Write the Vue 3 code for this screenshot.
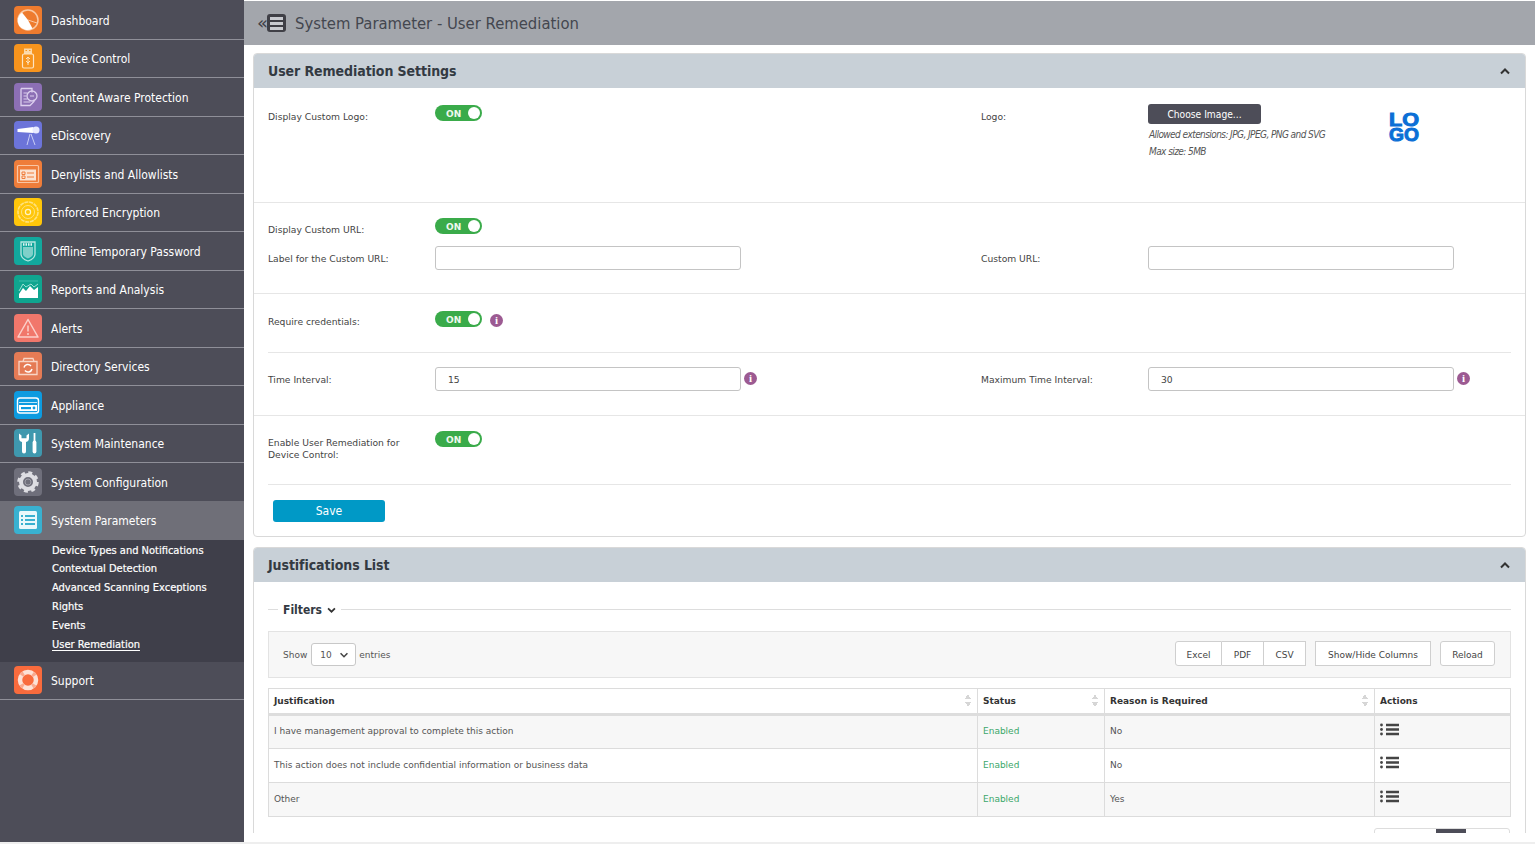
<script setup>
const menu = [
  { name: 'Dashboard', bg: '#ee7b2e', icon: '<circle cx="14" cy="14" r="10" fill="none" stroke="#f9c9a4" stroke-width="1.5"/><path d="M14 14 L8 6.5 A9.5 9.5 0 0 0 18.5 22.5Z" fill="#fff"/><path d="M14 14l9 3" stroke="#f9c9a4" fill="none"/>' },
  { name: 'Device Control', bg: '#f7941d', icon: '<rect x="10" y="4.5" width="8" height="5.5" fill="#fbd8a8"/><path d="M11.500 6.500h1.500M15 6.500h1.500" stroke="#f7941d"/><rect x="8.5" y="10" width="11" height="14" rx="1.5" fill="none" stroke="#fde3c2" stroke-width="1.2"/><path d="M14 13v8M12 15l2-2 2 2M12 17l2 2 2-2" fill="none" stroke="#fde3c2"/>' },
  { name: 'Content Aware Protection', bg: '#8c6fb5', icon: '<path d="M7 5.5h11v4M7 5.5v17h9l4-4v-2" fill="none" stroke="#dccfee" stroke-width="1.3"/><circle cx="18" cy="13" r="5" fill="none" stroke="#dccfee" stroke-width="1.3"/><path d="M9.5 10h4M9.5 13h3M9.5 16h4M9.5 19h7M16 13h4" stroke="#dccfee"/>' },
  { name: 'eDiscovery', bg: '#6c74d9', icon: '<path d="M3.5 8l16-2v6l-16-1z" fill="#fff"/><circle cx="22" cy="9" r="3.5" fill="#e8eaff"/><path d="M16 13l-3 11M17 13l4 11" stroke="#c9cdf6" fill="none"/>' },
  { name: 'Denylists and Allowlists', bg: '#ef7d3a', icon: '<rect x="3.5" y="5.5" width="21" height="17" rx="1" fill="none" stroke="#f9c6a4" stroke-width="1.2"/><rect x="6" y="9.5" width="16" height="11" fill="#fbe3d2"/><path d="M8 12h3v2.5H8zM8 16h3v2.5H8zM13 13h7M13 17h7" stroke="#ef7d3a" fill="none"/>' },
  { name: 'Enforced Encryption', bg: '#ffc60a', icon: '<circle cx="14" cy="14" r="10" fill="none" stroke="#ffe27f" stroke-width="1.6" stroke-dasharray="4 .8"/><circle cx="14" cy="14" r="6.5" fill="none" stroke="#ffe27f"/><circle cx="14" cy="14" r="2.6" fill="none" stroke="#fff3c4" stroke-width="1.2"/>' },
  { name: 'Offline Temporary Password', bg: '#12a89d', icon: '<path d="M7 5h14v12c0 4-4 6-7 7-3-1-7-3-7-7z" fill="none" stroke="#b6e6e1" stroke-width="1.3"/><path d="M9 10h10v7c0 2-3 3.500-5 4.500-2-1-5-2.500-5-4.500z" fill="#7fd0c9"/><path d="M9 7.500h10" stroke="#e2f6f4" stroke-width="2.500" stroke-dasharray="1.500 1"/>' },
  { name: 'Reports and Analysis', bg: '#0fa58f', icon: '<path d="M5 6h19" stroke="#3dbcaa"/><path d="M5 23V19l4-6 3 3 4-5 4 4 4-3v11z" fill="#fff"/><path d="M5 16l4-7 3 3 5-3 3 3 4-3" fill="none" stroke="#9fe0d5"/>' },
  { name: 'Alerts', bg: '#f1776b', icon: '<path d="M14 5.500L24 23H4z" fill="none" stroke="#fbd0ca" stroke-width="1.500" stroke-linejoin="round"/><path d="M14 11.500v6" stroke="#fbd0ca" stroke-width="1.500"/><circle cx="14" cy="20" r="1" fill="#fbd0ca"/>' },
  { name: 'Directory Services', bg: '#e57b55', icon: '<path d="M5 9.500h18v13H5zM9 9.500l1-3h9l1 3" fill="none" stroke="#f8d5c6" stroke-width="1.300"/><path d="M10 15.500a4 4 0 0 1 7-1.500M18 17a4 4 0 0 1-7 1.500" fill="none" stroke="#fff" stroke-width="1.500"/>' },
  { name: 'Appliance', bg: '#0d9be0', icon: '<rect x="3.500" y="7" width="21" height="15" rx="2.500" fill="none" stroke="#fff" stroke-width="1.400"/><rect x="5" y="14" width="18" height="6" fill="#fff"/><path d="M5 11.500h18" stroke="#bfe5f8" stroke-width="1"/><rect x="7" y="16" width="10" height="2.200" fill="#0d9be0"/><circle cx="20" cy="17" r="1.400" fill="#0d9be0"/>' },
  { name: 'System Maintenance', bg: '#3f98ae', icon: '<path d="M5 4.500v4.500c0 2.200 1 3.500 3 4v9.500a2 2 0 0 0 4 0V13c2-.5 3-1.800 3-4V4.500l-2.500 2v2.700h-5V6.500z" fill="#fff"/><path d="M20.500 4v8" stroke="#fff" stroke-width="1.800"/><path d="M20.500 13.500v9" stroke="#fff" stroke-width="3.800" stroke-linecap="round"/>' },
  { name: 'System Configuration', bg: '#6f6f7b', icon: '<circle cx="14" cy="14" r="7" fill="none" stroke="#dedee3" stroke-width="4"/><circle cx="14" cy="14" r="9.500" fill="none" stroke="#dedee3" stroke-width="2.500" stroke-dasharray="4 3.460"/><circle cx="14" cy="14" r="3" fill="none" stroke="#a9a9b3" stroke-width=".8"/>' },
  { name: 'System Parameters', bg: '#39b1d0', active: true, icon: '<rect x="5" y="5" width="18" height="18" rx="1.500" fill="#e9f8fb"/><path d="M7 10h2M7 14h2M7 18h2M11 10h10M11 14h10M11 18h10" stroke="#39b1d0" stroke-width="2"/>' },
];

const subMenu = ['Device Types and Notifications', 'Contextual Detection', 'Advanced Scanning Exceptions', 'Rights', 'Events', 'User Remediation'];

const support = { name: 'Support', bg: '#f96b3d', icon: '<circle cx="14" cy="14" r="8" fill="none" stroke="#fde1d6" stroke-width="4.500"/><circle cx="14" cy="14" r="8" fill="none" stroke="#f9a98e" stroke-width="4.500" stroke-dasharray="3 9.570" stroke-dashoffset="7.800"/>' };

const rows = [
  { text: 'I have management approval to complete this action', reason: 'No' },
  { text: 'This action does not include confidential information or business data', reason: 'No' },
  { text: 'Other', reason: 'Yes' },
];
</script>

<template>
  <div class="page">
    <aside class="sidebar">
      <template v-for="item in menu" :key="item.name">
        <div class="menuItem" :class="{ active: item.active }">
          <span class="menuIcon" :style="{ backgroundColor: item.bg }">
            <svg viewBox="0 0 28 28" width="28" height="28" v-html="item.icon"></svg>
          </span>
          <span class="menuText">{{ item.name }}</span>
        </div>
      </template>
      <ul class="subMenu">
        <li v-for="sub in subMenu" :key="sub">
          <span :class="{ current: sub === 'User Remediation' }">{{ sub }}</span>
        </li>
      </ul>
      <div class="menuItem">
        <span class="menuIcon" :style="{ backgroundColor: support.bg }">
          <svg viewBox="0 0 28 28" width="28" height="28" v-html="support.icon"></svg>
        </span>
        <span class="menuText">{{ support.name }}</span>
      </div>
    </aside>

    <main class="main">
      <header class="topBar">
        <span class="collapse">«</span>
        <span class="burger"><i></i><i></i><i></i></span>
        <h1>System Parameter - User Remediation</h1>
      </header>

      <div class="content">
        <section class="panel">
          <div class="panelHead">
            <h2>User Remediation Settings</h2>
            <svg class="chevron" viewBox="0 0 10 7" width="10" height="7"><path d="M1 5.500l4-4 4 4" fill="none" stroke="#333" stroke-width="2" /></svg>
          </div>

          <div class="row rowLogo">
            <label>Display Custom Logo:</label>
            <div><span class="toggle">ON<b></b></span></div>
            <label>Logo:</label>
            <div class="logoCell">
              <div>
                <button class="chooseBtn">Choose Image...</button>
                <p class="hint">Allowed extensions: JPG, JPEG, PNG and SVG</p>
                <p class="hint">Max size: 5MB</p>
              </div>
              <svg class="logoMark" viewBox="0 0 31 30" width="31" height="30">
                <text x="0" y="14" textLength="30" lengthAdjust="spacingAndGlyphs">LO</text>
                <text x="0" y="29" textLength="30" lengthAdjust="spacingAndGlyphs">GO</text>
              </svg>
            </div>
          </div>

          <div class="row rowUrl">
            <label>Display Custom URL:</label>
            <div class="urlToggle"><span class="toggle">ON<b></b></span></div>
            <label class="lineTwo">Label for the Custom URL:</label>
            <div class="lineTwo"><input class="field" /></div>
            <label class="lineTwo">Custom URL:</label>
            <div class="lineTwo"><input class="field" /></div>
          </div>

          <div class="row rowCreds inset">
            <label>Require credentials:</label>
            <div class="inline">
              <span class="toggle">ON<b></b></span>
              <span class="info low">i</span>
            </div>
          </div>

          <div class="row rowTime">
            <label>Time Interval:</label>
            <div class="inline"><input class="field" value="15" /><span class="info high">i</span></div>
            <label>Maximum Time Interval:</label>
            <div class="inline"><input class="field" value="30" /><span class="info high">i</span></div>
          </div>

          <div class="row rowEnable inset">
            <label>Enable User Remediation for<br />Device Control:</label>
            <div><span class="toggle">ON<b></b></span></div>
          </div>

          <div class="saveRow"><button class="saveBtn">Save</button></div>
        </section>

        <section class="panel listPanel">
          <div class="panelHead">
            <h2>Justifications List</h2>
            <svg class="chevron" viewBox="0 0 10 7" width="10" height="7"><path d="M1 5.500l4-4 4 4" fill="none" stroke="#333" stroke-width="2" /></svg>
          </div>

          <div class="listBody">
            <div class="filters">
              <span class="rule short"></span>
              <strong>Filters</strong>
              <svg viewBox="0 0 10 7" width="9" height="6"><path d="M1 1.500l4 4 4-4" fill="none" stroke="#333" stroke-width="2" /></svg>
              <span class="rule"></span>
            </div>

            <div class="toolbar">
              <span>Show</span>
              <span class="select">10
                <svg viewBox="0 0 10 7" width="10" height="6"><path d="M1 1.500l4 4 4-4" fill="none" stroke="#444" stroke-width="1.800" /></svg>
              </span>
              <span>entries</span>
              <div class="actions">
                <div class="btnGroup">
                  <button>Excel</button><button>PDF</button><button>CSV</button>
                </div>
                <button class="toolBtn">Show/Hide Columns</button>
                <button class="toolBtn reload">Reload</button>
              </div>
            </div>

            <table>
              <colgroup>
                <col style="width: 709px" />
                <col style="width: 127px" />
                <col style="width: 270px" />
                <col />
              </colgroup>
              <thead>
                <tr>
                  <th class="sortable">Justification</th>
                  <th class="sortable">Status</th>
                  <th class="sortable">Reason is Required</th>
                  <th>Actions</th>
                </tr>
              </thead>
              <tbody>
                <tr v-for="row in rows" :key="row.text">
                  <td>{{ row.text }}</td>
                  <td class="enabled">Enabled</td>
                  <td>{{ row.reason }}</td>
                  <td class="actionCell">
                    <svg viewBox="0 0 19 13" width="19" height="13">
                      <path d="M6 2h13M6 6.500h13M6 11h13" stroke="#444" stroke-width="2.400" />
                      <circle cx="1.500" cy="2" r="1.400" fill="#444" />
                      <circle cx="1.500" cy="6.500" r="1.400" fill="#444" />
                      <circle cx="1.500" cy="11" r="1.400" fill="#444" />
                    </svg>
                  </td>
                </tr>
              </tbody>
            </table>

            <div class="pager"><span></span><span class="currentPage"></span><span></span></div>
          </div>
        </section>
      </div>
      <div class="gap"></div>
    </main>
  </div>
</template>

<style>
html, body { margin: 0; background: #fff; overflow: hidden; }
</style>

<style scoped>
.page {
  display: flex;
  height: 844px;
  font-family: "DejaVu Sans", Verdana, sans-serif;
  color: #444;
  overflow: hidden;
  border-bottom: 2px solid #eee;
  box-sizing: border-box;
}
.sidebar {
  width: 244px;
  flex-shrink: 0;
  padding-top: 1px;
  background: #4d4d58;
  color: #fff;
  font-size: 12px;
  font-stretch: condensed;
}
.menuItem {
  display: flex;
  align-items: center;
  gap: 9px;
  height: 38.5px;
  box-sizing: border-box;
  padding-left: 14px;
  border-bottom: 1px solid #8f8f98;
}
.menuItem.active {
  background: #6f6f78;
  border-bottom-color: #6f6f78;
  margin-top: -0.5px;
}
.menuText { margin-top: 2px; }
.menuIcon {
  width: 28px;
  height: 28px;
  border-radius: 4px;
  display: block;
  flex-shrink: 0;
}
.menuIcon svg { display: block; }
.subMenu {
  list-style: none;
  margin: 0;
  padding: 1px 0 8px 52px;
  background: #3f3f4a;
  font-size: 11px;
  -webkit-text-stroke: 0.2px #fff;
}
.subMenu li {
  height: 18.85px;
  line-height: 19px;
}
.subMenu .current {
  text-decoration: underline;
  text-underline-offset: 2px;
}
.main {
  flex: 1;
  min-width: 0;
  display: flex;
  flex-direction: column;
}
.topBar {
  height: 44px;
  flex-shrink: 0;
  background: #a3a6ac;
  display: flex;
  align-items: center;
  padding-left: 13px;
  box-sizing: border-box;
  margin-top: 1px;
}
.collapse {
  font-size: 18px;
  line-height: 18px;
  color: #3f3f46;
  width: 10px;
}
.burger {
  width: 19px;
  height: 18px;
  background: #3f3f46;
  border-radius: 3px;
  display: flex;
  flex-direction: column;
  justify-content: center;
  align-items: center;
  gap: 2px;
}
.burger i {
  width: 13px;
  height: 3px;
  background: #c9cbd0;
}
h1 {
  margin: 0 0 0 9px;
  font-size: 16.5px;
  font-weight: 400;
  color: #44474f;
  font-stretch: condensed;
}
.content {
  flex: 1;
  min-height: 0;
  overflow: hidden;
  padding: 8px 9px 0;
}
.gap { height: 9px; flex-shrink: 0; }
.panel {
  border: 1px solid #d9d9d9;
  border-radius: 4px;
  background: #fff;
}
.panelHead {
  height: 34px;
  background: #c8d0d7;
  display: flex;
  align-items: center;
  justify-content: space-between;
  padding: 0 15px 0 14px;
  border-radius: 3px 3px 0 0;
}
h2 {
  margin: 0;
  font-size: 14px;
  font-weight: 700;
  color: #333a42;
  font-stretch: condensed;
  letter-spacing: -0.08px;
}
.row {
  display: grid;
  grid-template-columns: 167px 546px 167px 1fr;
  padding: 0 14px;
  border-bottom: 1px solid #e6e6e6;
  font-size: 9.2px;
}
.row label { line-height: 12px; color: #444; }
.rowLogo { height: 115px; padding-top: 17px; box-sizing: border-box; }
.rowLogo label { padding-top: 6px; }
.logoCell { display: flex; }
.chooseBtn {
  display: block;
  width: 113px;
  height: 20px;
  margin-top: -1px;
  background: #4d4d58;
  color: #fff;
  border: 0;
  border-radius: 3px;
  font: inherit;
  font-size: 10.2px;
  font-stretch: condensed;
}
.hint {
  margin: 5px 0 0 1px;
  height: 12px;
  line-height: 12px;
  font-style: italic;
  font-size: 10px;
  font-stretch: condensed;
  color: #555;
  letter-spacing: -0.58px;
}
.logoMark {
  margin: 7px 0 0 64px;
  flex-shrink: 0;
  overflow: visible;
}
.logoMark text {
  font-family: "Liberation Sans", sans-serif;
  font-weight: 700;
  font-size: 19px;
  fill: #0b6fd6;
  stroke: #0b6fd6;
  stroke-width: 1px;
}
.rowUrl {
  height: 91px;
  box-sizing: border-box;
  padding-top: 15px;
  align-content: start;
}
.rowUrl > label:first-child { padding-top: 6px; }
.urlToggle { grid-column: 2 / 5; height: 28px; }
.lineTwo { align-self: center; }
label.lineTwo { padding-top: 2px; }
.rowCreds { height: 59px; box-sizing: border-box; padding-top: 16px; }
.rowCreds label { padding-top: 6px; }
.rowTime { height: 63px; box-sizing: border-box; padding-top: 14px; }
.rowTime label { padding-top: 7px; }
.rowEnable { height: 69px; box-sizing: border-box; padding-top: 15px; }
.rowEnable label { padding-top: 6px; }
.inset {
  margin: 0 14px;
  padding-left: 0;
  padding-right: 0;
}
.inline {
  display: flex;
  align-items: center;
  align-self: start;
  gap: 8px;
}
.toggle {
  position: relative;
  display: block;
  width: 47px;
  height: 16px;
  border-radius: 8px;
  background: #3aab4a;
  color: #eef8ee;
  font-size: 9px;
  font-weight: 700;
  line-height: 18px;
  padding-left: 11px;
  box-sizing: border-box;
}
.toggle b {
  position: absolute;
  right: 2px;
  top: 2px;
  width: 12px;
  height: 12px;
  border-radius: 50%;
  background: #fff;
}
.field {
  width: 306px;
  height: 24px;
  box-sizing: border-box;
  border: 1px solid #c4c4c4;
  border-radius: 3px;
  padding: 0 12px;
  font: inherit;
  color: #444;
  background: #fff;
  display: block;
  flex-shrink: 0;
}
.inline .field { margin-right: -5px; }
.info {
  width: 13px;
  height: 13px;
  border-radius: 50%;
  background: #9c5a92;
  color: #fff;
  font-family: "Liberation Serif", serif;
  font-weight: 700;
  font-size: 11px;
  line-height: 13px;
  text-align: center;
  flex-shrink: 0;
}
.info.low { margin-top: 4px; }
.info.high { margin-bottom: 2px; }
.saveRow {
  padding: 15px 19px 14px;
}
.saveBtn {
  display: block;
  width: 112px;
  height: 22px;
  background: #0099c6;
  border: 0;
  border-radius: 3px;
  color: #fff;
  font: inherit;
  font-size: 12px;
  font-stretch: condensed;
}
.listPanel { margin-top: 10px; height: 400px; }
.listBody { padding: 20px 14px 0; }
.filters {
  display: flex;
  align-items: center;
  height: 16px;
  gap: 5px;
  font-size: 12px;
  color: #333a42;
  font-stretch: condensed;
}
.rule {
  flex: 1;
  height: 1px;
  background: #ddd;
  margin-bottom: 2px;
}
.rule.short { flex: none; width: 10px; }
.toolbar {
  margin-top: 13px;
  height: 47px;
  box-sizing: border-box;
  display: flex;
  align-items: center;
  gap: 4px;
  padding: 0 15px 0 14px;
  background: #f7f7f7;
  border: 1px solid #e3e3e3;
  font-size: 9px;
  color: #555;
}
.select {
  display: flex;
  align-items: center;
  justify-content: space-between;
  width: 45px;
  height: 23px;
  box-sizing: border-box;
  padding: 1px 6px 0 8px;
  margin-right: -1px;
  background: #fff;
  border: 1px solid #c8c8c8;
  border-radius: 3px;
}
.actions {
  margin-left: auto;
  margin-bottom: 2px;
  display: flex;
  gap: 9px;
}
.btnGroup { display: flex; }
.actions button {
  height: 25px;
  background: #fff;
  border: 1px solid #cfcfcf;
  color: #444;
  font: inherit;
  font-size: 9px;
  padding: 2px 0 0;
}
.btnGroup button { width: 42px; border-left-width: 0; }
.btnGroup button:first-child { width: 47px; border-left-width: 1px; border-radius: 3px 0 0 3px; }
.actions .toolBtn { width: 116px; }
.actions .reload { width: 55px; border-radius: 3px; }
table {
  margin-top: 10px;
  width: 100%;
  table-layout: fixed;
  border-collapse: collapse;
  font-size: 9px;
}
th, td {
  border: 1px solid #dcdcdc;
  text-align: left;
  padding: 0 5px;
}
th {
  height: 26px;
  box-sizing: border-box;
  color: #333;
  font-weight: 700;
  border-bottom: 3px solid #ddd;
  background: #fff;
  position: relative;
}
.sortable::after {
  content: "";
  position: absolute;
  right: 6px;
  top: 5px;
  width: 6px;
  height: 13px;
  background:
    linear-gradient(to bottom right, transparent 50%, #d6d6d6 50%) left top / 3px 5px no-repeat,
    linear-gradient(to bottom left, transparent 50%, #d6d6d6 50%) right top / 3px 5px no-repeat,
    linear-gradient(to top right, transparent 50%, #d6d6d6 50%) left bottom / 3px 5px no-repeat,
    linear-gradient(to top left, transparent 50%, #d6d6d6 50%) right bottom / 3px 5px no-repeat;
}
td {
  height: 34px;
  box-sizing: border-box;
  color: #555;
  padding-bottom: 2px;
}
tbody tr:nth-child(odd) td { background: #f7f7f7; }
.enabled { color: #3aa76a; }
.actionCell svg { display: block; margin: -4px 0 0 0; }
.pager {
  display: flex;
  margin: 11px 1px 0 auto;
  width: 136px;
  height: 25px;
  border: 1px solid #ddd;
  border-radius: 3px;
  box-sizing: border-box;
}
.pager span { flex: 1; }
.pager span:first-child { flex: none; width: 61px; }
.pager .currentPage { flex: none; width: 30px; background: #4d4d58; }
</style>
